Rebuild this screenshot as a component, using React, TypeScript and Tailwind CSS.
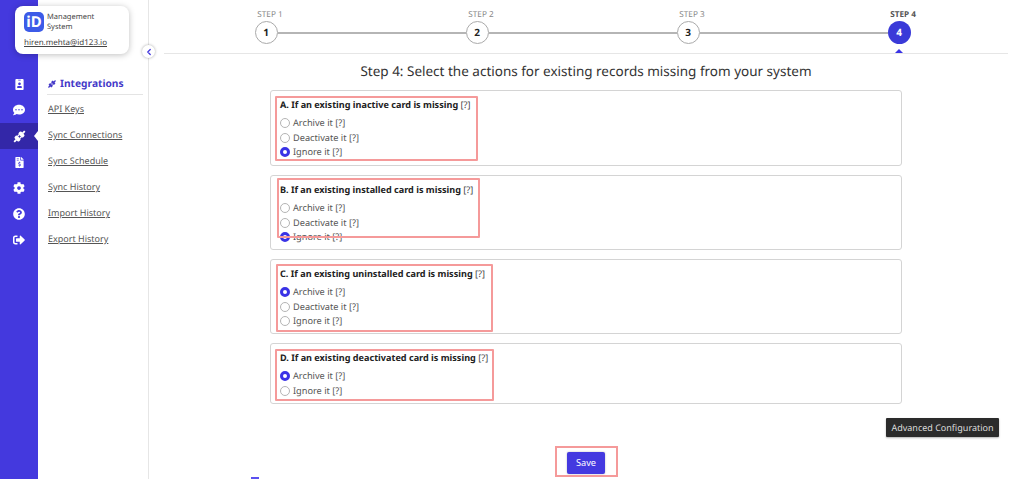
import { ChevronLeft } from "lucide-react";
import {
  FaCog,
  FaCommentDots,
  FaFileInvoiceDollar,
  FaIdBadge,
  FaQuestionCircle,
  FaSignOutAlt,
} from "react-icons/fa";

function PlugIcon({ size, className }: { size: number; className?: string }) {
  return (
    <svg width={size} height={size} viewBox="0 0 24 24" fill="currentColor" className={className}>
      <g transform="rotate(45 12 12)">
        <rect x="7" y="13.5" width="10" height="6" rx="2" />
        <rect x="10.5" y="19" width="3" height="5" />
        <rect x="8.5" y="10.5" width="2" height="3" />
        <rect x="13.5" y="10.5" width="2" height="3" />
        <rect x="7" y="4.5" width="10" height="6" rx="2" />
        <rect x="10.5" y="0" width="3" height="5" />
      </g>
    </svg>
  );
}

const navIcons = [
  { icon: FaIdBadge, size: 11 },
  { icon: FaCommentDots, size: 12 },
  { icon: PlugIcon, size: 15, active: true },
  { icon: FaFileInvoiceDollar, size: 11 },
  { icon: FaCog, size: 12 },
  { icon: FaQuestionCircle, size: 12 },
  { icon: FaSignOutAlt, size: 12 },
];

const links = ["API Keys", "Sync Connections", "Sync Schedule", "Sync History", "Import History", "Export History"];

const cards = [
  {
    title: "A. If an existing inactive card is missing",
    options: ["Archive it", "Deactivate it", "Ignore it"],
    selected: 2,
    height: "h-[76px]",
    box: "left-[4px] top-[5px] h-[65px] w-[203px]",
  },
  {
    title: "B. If an existing installed card is missing",
    options: ["Archive it", "Deactivate it", "Ignore it"],
    selected: 2,
    height: "h-[75px]",
    box: "left-[6px] top-[2px] h-[60px] w-[203px]",
  },
  {
    title: "C. If an existing uninstalled card is missing",
    options: ["Archive it", "Deactivate it", "Ignore it"],
    selected: 0,
    height: "h-[75px]",
    box: "left-[5px] top-[4px] h-[68px] w-[217px]",
  },
  {
    title: "D. If an existing deactivated card is missing",
    options: ["Archive it", "Ignore it"],
    selected: 0,
    height: "h-[61px]",
    box: "left-[4px] top-[5px] h-[52px] w-[219px]",
  },
];

function Radio({ on }: { on: boolean }) {
  if (on) {
    return <span className="h-[10px] w-[10px] shrink-0 rounded-full border-[3px] border-[#3a33e6] bg-white" />;
  }
  return <span className="h-[10px] w-[10px] shrink-0 rounded-full border border-[#b4b4b4] bg-white" />;
}

function Step({ n, active }: { n: number; active?: boolean }) {
  return (
    <div className="relative flex w-[23px] flex-col items-center">
      <div
        className={
          active
            ? "h-[21px] translate-x-[4px] whitespace-nowrap pt-[7px] text-[8.2px] font-bold leading-[15px] text-[#555]"
            : "h-[21px] translate-x-[4px] whitespace-nowrap pt-[7px] text-[8.2px] leading-[15px] text-[#888]"
        }
      >
        STEP {n}
      </div>
      <div
        className={
          active
            ? "flex h-[23px] w-[23px] items-center justify-center rounded-full bg-[#3a3ad8] text-[10px] font-bold text-white"
            : "flex h-[23px] w-[23px] items-center justify-center rounded-full border border-[#aaa] bg-white text-[10px] font-bold text-[#222]"
        }
      >
        {n}
      </div>
      {active && (
        <div className="absolute left-[7px] top-[49px] h-0 w-0 border-x-[4px] border-b-[4px] border-x-transparent border-b-[#3a33e6]" />
      )}
    </div>
  );
}

function StepLine() {
  return <div className="mt-[31.5px] h-[2px] flex-1 bg-[#b5b5b5]" />;
}

export default function App() {
  return (
    <div className="relative flex h-[479px] w-[1024px] overflow-hidden bg-white font-['Noto_Sans','Open_Sans',sans-serif] text-[#333] [text-rendering:geometricPrecision]">
      <aside className="flex w-[38px] shrink-0 flex-col bg-[#4439de] pt-[71px] text-white">
        {navIcons.map((item, i) => {
          const Icon = item.icon;
          return (
            <div
              key={i}
              className={
                item.active
                  ? "relative flex h-[26px] items-center justify-center bg-[#3327a8]"
                  : "flex h-[26px] items-center justify-center"
              }
            >
              <Icon size={item.size} />
              {item.active && (
                <span className="absolute right-0 top-[8px] h-0 w-0 border-y-[5px] border-r-[4px] border-y-transparent border-r-white" />
              )}
            </div>
          );
        })}
      </aside>

      <div className="absolute left-[15px] top-[6px] h-[48px] w-[114px] rounded-lg bg-white px-[9px] pt-[6px] shadow-[0_1px_6px_rgba(0,0,0,0.25)]">
        <div className="flex items-center gap-[3px]">
          <div className="flex h-[20px] w-[20px] items-center justify-center rounded-[5px] bg-[#3c5be8] text-[15px] font-bold leading-none text-white">
            iD
          </div>
          <div className="text-[7.5px] leading-[10px] text-[#444]">
            Management
            <br />
            System
          </div>
        </div>
        <div className="mt-[5px] whitespace-nowrap text-[8px] leading-[12px] text-[#444] underline">hiren.mehta@id123.io</div>
      </div>

      <nav className="relative w-[111px] shrink-0 border-r border-[#e6e6e6] pl-[9px] pr-[5px] pt-[74px]">
        <div className="flex h-[21px] items-center gap-[3px] border-b border-[#e4e4e4] text-[10.2px] font-bold text-[#4439c8]">
          <PlugIcon size={10} />
          Integrations
        </div>
        <div className="pt-[1px]">
          {links.map((l) => (
            <div key={l} className="flex h-[26px] items-center pl-[1px] text-[9px] text-[#555] underline">
              {l}
            </div>
          ))}
        </div>
        <button className="absolute right-[-7px] top-[45px] flex h-[13px] w-[13px] items-center justify-center rounded-full bg-white text-[#4439de] shadow-[0_0_3px_rgba(0,0,0,0.35)]">
          <ChevronLeft size={10} strokeWidth={3} />
        </button>
      </nav>

      <main className="ml-[15px] flex w-[844px] shrink-0 flex-col items-center">
        <div className="ml-[90.5px] flex h-[53px] w-[656px] self-start">
          <Step n={1} />
          <StepLine />
          <Step n={2} />
          <StepLine />
          <Step n={3} />
          <StepLine />
          <Step n={4} active />
        </div>
        <div className="h-px w-full bg-[#e6e6e6]" />
        <h1 className="mt-[7px] text-[13.5px] leading-[20px] text-[#333]">
          Step 4: Select the actions for existing records missing from your system
        </h1>
        <div className="ml-[106px] mt-[9px] flex w-[632px] flex-col gap-[9px] self-start">
          {cards.map((c) => (
            <section key={c.title} className={`relative rounded-[3px] border border-[#d4d4d4] pl-[9px] pt-[6px] ${c.height}`}>
              <div className="text-[9.1px] font-bold leading-[15px] text-[#222]">
                {c.title} <span className="font-normal text-[#444]">[?]</span>
              </div>
              <div className="mt-[4px]">
                {c.options.map((o, i) => (
                  <div key={o} className="flex h-[14.5px] items-center gap-[3px] text-[9.2px] text-[#555]">
                    <Radio on={i === c.selected} />
                    <span>{o} [?]</span>
                  </div>
                ))}
              </div>
              <div className={`pointer-events-none absolute rounded-[1px] border-2 border-[#f59a9a] ${c.box}`} />
            </section>
          ))}
        </div>
        <div className="relative ml-[403px] mt-[48px] self-start">
          <button className="block h-[22px] w-[38px] rounded-[2px] bg-[#4439e0] text-[9.2px] text-white shadow-[0_0_2px_rgba(0,0,0,0.3)]">
            Save
          </button>
          <div className="pointer-events-none absolute left-[-12px] top-[-6px] h-[31px] w-[63px] border-2 border-[#f59a9a]" />
        </div>
      </main>

      <div className="absolute left-[886px] top-[418px] flex h-[19px] w-[113px] items-center justify-center whitespace-nowrap rounded-[1px] bg-[#2b2b2b] text-[9px] text-[#ddd] shadow-[0_1px_2px_rgba(0,0,0,0.3)]">
        Advanced Configuration
      </div>
      <div className="absolute left-[251px] top-[477px] h-[2px] w-[8px] bg-[#5b50f0]" />
    </div>
  );
}
